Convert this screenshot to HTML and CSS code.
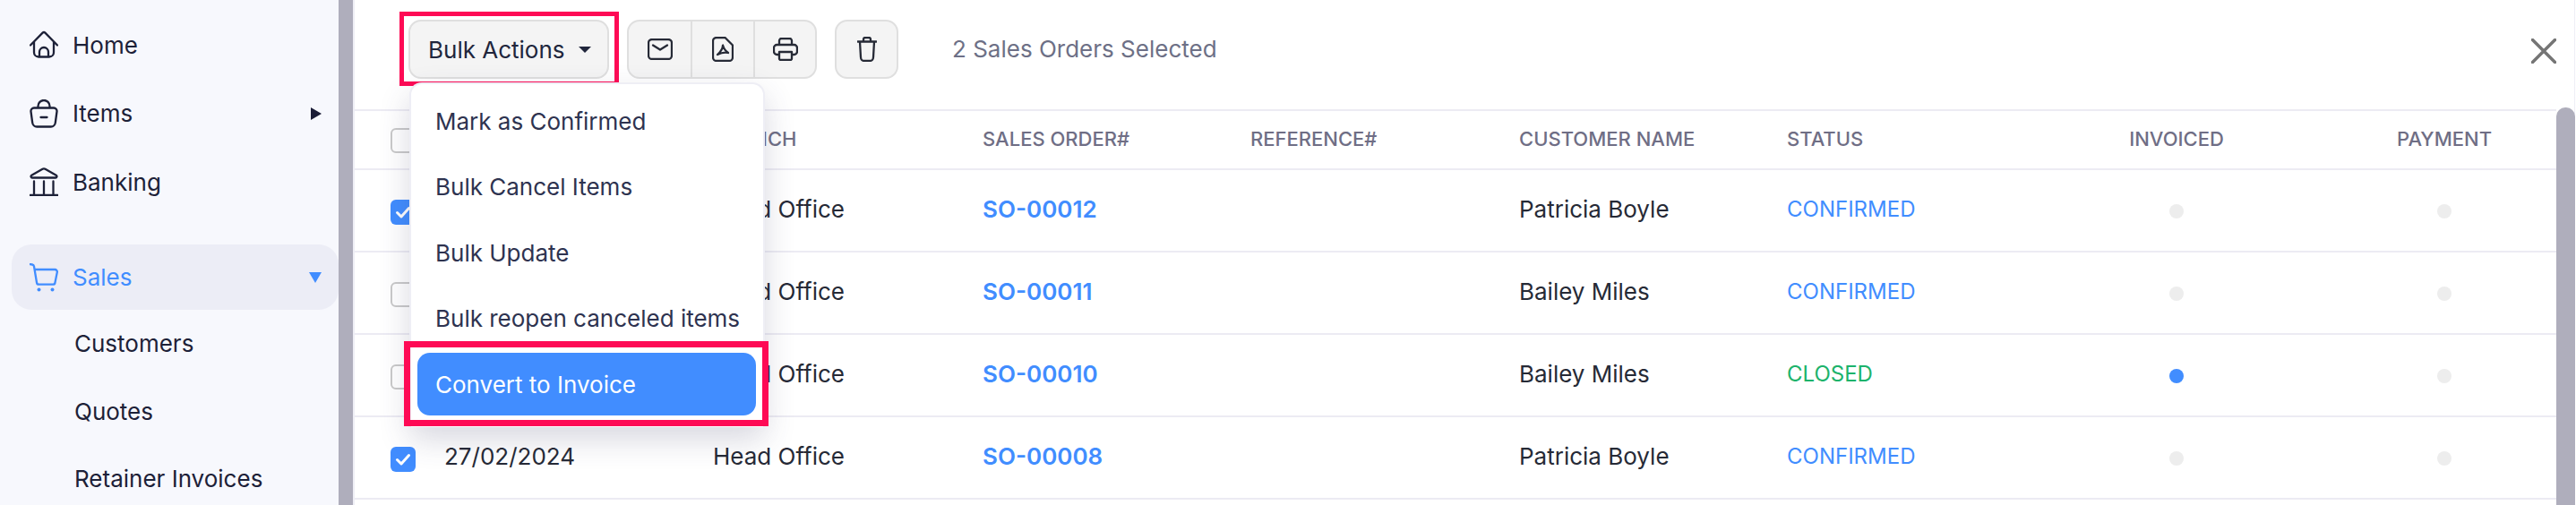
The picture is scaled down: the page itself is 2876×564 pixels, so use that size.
FILE: index.html
```html
<!DOCTYPE html>
<html lang="en">
<head>
<meta charset="utf-8">
<title>Sales Orders</title>
<link rel="stylesheet" href="styles.css">
</head>
<body>
<div class="page">
  <aside class="sidebar">
    <nav class="nav">
      <a class="nav-item">
        <svg class="nav-icon" viewBox="0 0 32 32"><path d="M1 16.5 14.6 2.6a2 2 0 0 1 2.8 0L31 16.500M5 13v11.500a5 5 0 0 0 5 5h12a5 5 0 0 0 5-5V13M11 29.500V24a5 5 0 0 1 10 0v5.500"/></svg>
        <span>Home</span>
      </a>
      <a class="nav-item">
        <svg class="nav-icon" viewBox="0 0 32 32"><path d="M9.500 9.500V7.500a6.500 6.500 0 0 1 13 0v2M5 9.500h22a3.500 3.500 0 0 1 3.500 4l-1.700 12.500a5 5 0 0 1-5 4.500H8.200a5 5 0 0 1-5-4.500L1.500 13.500a3.500 3.500 0 0 1 3.500-4ZM12.500 20h7"/></svg>
        <span>Items</span>
        <i class="arrow-right"></i>
      </a>
      <a class="nav-item">
        <svg class="nav-icon" viewBox="0 0 32 32"><path d="M14.500 1.800 2.300 8.800C1 9.600 1.500 11.500 3 11.500h26c1.500 0 2-1.900.7-2.700L17.500 1.800a3 3 0 0 0-3 0ZM5 15.500V30M16 15.500V30M26.500 15.500V30M.5 31h31"/></svg>
        <span>Banking</span>
      </a>
      <a class="nav-item nav-active">
        <svg class="nav-icon" viewBox="0 0 32 32"><path d="M.5 1 3 1.500a2.500 2.500 0 0 1 2 2L8 21.500a2.500 2.500 0 0 0 2.500 2.200H26a2.500 2.500 0 0 0 2.500-2.200l2.300-11.500a2.500 2.500 0 0 0-2.500-3H6"/><circle class="dot-fill" cx="10.500" cy="29.500" r="2"/><circle class="dot-fill" cx="25.500" cy="29.500" r="2"/></svg>
        <span>Sales</span>
        <i class="arrow-down"></i>
      </a>
      <a class="nav-sub">Customers</a>
      <a class="nav-sub">Quotes</a>
      <a class="nav-sub">Retainer Invoices</a>
    </nav>
  </aside>
  <div class="side-scroll"></div>
  <main class="main">
    <header class="toolbar">
      <div class="bulk">
        <button class="btn btn-bulk">Bulk Actions<i class="caret"></i></button>
        <span class="frame frame-bulk"></span>
        <ul class="menu">
          <li class="menu-item">Mark as Confirmed</li>
          <li class="menu-item">Bulk Cancel Items</li>
          <li class="menu-item">Bulk Update</li>
          <li class="menu-item">Bulk reopen canceled items</li>
          <li class="menu-item menu-active">Convert to Invoice<span class="frame frame-convert"></span></li>
        </ul>
      </div>
      <div class="btn-group">
        <button class="btn-cell">
          <svg class="tool-mail" viewBox="0 0 28 24"><rect x="1" y="1" width="26" height="22" rx="4"/><path d="M6 7.500 14 12.500 22 7.500"/></svg>
        </button>
        <button class="btn-cell">
          <svg class="tool-pdf" viewBox="0 0 24 28"><path d="M5 1h9.500L23 9.500V23a4 4 0 0 1-4 4H5a4 4 0 0 1-4-4V5a4 4 0 0 1 4-4Z"/><path d="M12 9.500c0 3-2 7-6 10.500 4-2 8-3 12-2-3-2-5-5-6-8.500Z"/></svg>
        </button>
        <button class="btn-cell">
          <svg class="tool-print" viewBox="0 0 28 26"><path d="M7 8V3.500A2.500 2.500 0 0 1 9.500 1h9A2.500 2.500 0 0 1 21 3.500V8M7 19H4.500A3.500 3.500 0 0 1 1 15.500V11.500A3.500 3.500 0 0 1 4.500 8h19a3.500 3.500 0 0 1 3.500 3.500v4a3.500 3.500 0 0 1-3.500 3.500H21"/><path d="M7 16h14v7.500a1.500 1.500 0 0 1-1.500 1.500h-11A1.500 1.500 0 0 1 7 23.500Z"/></svg>
        </button>
      </div>
      <button class="btn-trash">
        <svg class="tool-trash" viewBox="0 0 22 28"><path d="M.5 5.500h21M7 5.500V3a2 2 0 0 1 2-2h4a2 2 0 0 1 2 2v2.500M3 5.500 4 23a4 4 0 0 0 4 4h6a4 4 0 0 0 4-4l1-17.500"/></svg>
      </button>
      <span class="selected">2 Sales Orders Selected</span>
      <button class="close">
        <svg viewBox="0 0 28 28"><path d="M1.500 1.500 26.500 26.500M26.500 1.500 1.500 26.500"/></svg>
      </button>
    </header>
    <section class="table">
      <div class="row row-head">
        <div class="cell-check"><span class="check"></span></div>
        <div>DATE</div>
        <div>BRANCH</div>
        <div>SALES ORDER#</div>
        <div>REFERENCE#</div>
        <div>CUSTOMER NAME</div>
        <div>STATUS</div>
        <div class="center">INVOICED</div>
        <div class="center">PAYMENT</div>
      </div>
      <div class="row">
        <div class="cell-check"><span class="check checked"><svg viewBox="0 0 28 28"><path d="M7.500 14.500 12 19l8.500-9.500"/></svg></span></div>
        <div>27/02/2024</div><div>Head Office</div><div class="so">SO-00012</div><div></div><div>Patricia Boyle</div><div class="status confirmed">CONFIRMED</div>
        <div class="center"><span class="dot"></span></div><div class="center"><span class="dot"></span></div>
      </div>
      <div class="row">
        <div class="cell-check"><span class="check"></span></div>
        <div>27/02/2024</div><div>Head Office</div><div class="so">SO-00011</div><div></div><div>Bailey Miles</div><div class="status confirmed">CONFIRMED</div>
        <div class="center"><span class="dot"></span></div><div class="center"><span class="dot"></span></div>
      </div>
      <div class="row">
        <div class="cell-check"><span class="check"></span></div>
        <div>27/02/2024</div><div>Head Office</div><div class="so">SO-00010</div><div></div><div>Bailey Miles</div><div class="status closed">CLOSED</div>
        <div class="center"><span class="dot dot-on"></span></div><div class="center"><span class="dot"></span></div>
      </div>
      <div class="row">
        <div class="cell-check"><span class="check checked"><svg viewBox="0 0 28 28"><path d="M7.500 14.500 12 19l8.500-9.500"/></svg></span></div>
        <div>27/02/2024</div><div>Head Office</div><div class="so">SO-00008</div><div></div><div>Patricia Boyle</div><div class="status confirmed">CONFIRMED</div>
        <div class="center"><span class="dot"></span></div><div class="center"><span class="dot"></span></div>
      </div>
    </section>
    <div class="thumb"></div>
  </main>
</div>
</body>
</html>
```

FILE: styles.css
```css
* { box-sizing: border-box; }
html, body { margin: 0; height: 100%; }
body {
  font-family: Inter, "Liberation Sans", sans-serif;
  font-size: 26px;
  color: #21263c;
  background: #fff;
  overflow: hidden;
}
.page { display: flex; width: 2876px; height: 564px; overflow: hidden; }

/* Sidebar */
.sidebar { width: 378px; flex: none; background: #f7f8fd; padding: 12px 0 0 13px; color: #1d2138; }
.nav { display: flex; flex-direction: column; }
.nav-item { display: flex; align-items: center; height: 76.5px; padding: 0 19px 0 20px; gap: 16px; }
.nav-icon { width: 32px; height: 32px; flex: none; fill: none; stroke: currentColor; stroke-width: 2.300; stroke-linecap: round; stroke-linejoin: round; }
.nav-active { height: 73px; margin-top: 31.500px; border-radius: 22px; background: #ecedf6; color: #418dff; }
.dot-fill { fill: currentColor; stroke: none; }
.arrow-right { margin-left: auto; width: 0; height: 0; border-left: 12px solid #1a1c36; border-top: 7.500px solid transparent; border-bottom: 7.500px solid transparent; }
.arrow-down { margin-left: auto; width: 0; height: 0; border-top: 12px solid #418dff; border-left: 7.500px solid transparent; border-right: 7.500px solid transparent; }
.nav-sub { display: flex; align-items: center; height: 75.500px; padding-left: 70px; }

.side-scroll { width: 16px; flex: none; background: #afaebc; }

/* Main */
.main { position: relative; flex: 1; min-width: 0; display: flex; flex-direction: column; border-left: 2px solid #eeeef5; border-right: 1px solid #eeeef5; margin-right: 1px; background: #fff; }
.toolbar { display: flex; align-items: flex-start; height: 122px; flex: none; padding: 22px 20px 0 60px; }
.bulk { position: relative; flex: none; }
.btn { display: flex; align-items: center; font: inherit; color: #21263c; background: #f4f4f4; border: 2px solid #dfdfdf; border-radius: 14px; }
.btn-bulk { width: 224px; height: 66px; padding: 0 0 0 20px; }
.caret { margin-left: 15px; width: 0; height: 0; border-top: 7px solid #21263c; border-left: 7px solid transparent; border-right: 7px solid transparent; }
.frame { position: absolute; border-style: solid; border-color: #fe0a55; pointer-events: none; }
.frame-bulk { inset: -9px -11px -8px -10.500px; border-width: 5px; }
.frame-convert { inset: -13px -14px -12px -15px; border-width: 7px; }
.menu { position: absolute; z-index: 2; left: 0.500px; top: 70px; width: 397px; height: 385px; margin: 0; padding: 6px 7.500px 0; list-style: none; display: flex; flex-direction: column; gap: 3.500px; background: #fff; border: 2px solid #eeeef5; border-bottom: 0; border-radius: 14px 14px 0 0; box-shadow: 0 14px 34px rgba(60, 60, 100, .2); color: #2e3350; }
.menu-item { position: relative; flex: none; display: flex; align-items: center; height: 70px; padding-left: 20px; border-radius: 14px; white-space: nowrap; }
.menu-active { background: #418dff; color: #fff; }
.btn-group { display: flex; height: 66px; margin-left: 20px; background: #f4f4f4; border: 2px solid #dfdfdf; border-radius: 14px; flex: none; }
.btn-cell { display: flex; align-items: center; justify-content: center; height: 100%; width: 69px; padding: 0; background: none; border: 0; border-left: 2px solid #dfdfdf; }
.btn-cell:first-child { border-left: 0; }
.btn-cell:nth-child(2) { width: 70px; }
.btn-trash { display: flex; align-items: center; justify-content: center; width: 71px; height: 66px; margin-left: 20px; padding: 0; background: #f4f4f4; border: 2px solid #dfdfdf; border-radius: 14px; flex: none; }
.toolbar svg { fill: none; stroke: #262a36; stroke-width: 2.300; stroke-linecap: round; stroke-linejoin: round; }
.tool-mail { width: 28px; height: 24px; }
.tool-pdf { width: 24px; height: 28px; }
.tool-print { width: 28px; height: 26px; }
.tool-trash { width: 22px; height: 28px; }
.selected { height: 66px; line-height: 66px; margin-left: 60px; color: #6d7086; }
.close { width: 28px; height: 28px; margin: 21px 0 0 auto; padding: 0; background: none; border: 0; }
.toolbar .close svg { display: block; width: 28px; height: 28px; stroke: #757575; stroke-width: 3.500; }

/* Table */
.table { flex: 1; min-height: 0; margin-right: 20px; overflow: hidden; border-top: 2px solid #ecebf3; }
.row { display: grid; grid-template-columns: 100px 300px 301px 299px 300px 299px 285px 300px 298px; align-items: center; height: 92px; padding-bottom: 3px; border-bottom: 2px solid #ecebf3; color: #262a36; white-space: nowrap; }
.row-head { height: 66px; font-size: 22px; font-weight: 500; color: #6f6e85; }
.row-head .cell-check { padding-top: 4px; }
.cell-check { padding-left: 40px; display: flex; padding-top: 7px; }
.check { display: block; width: 28px; height: 28px; background: #fff; border: 2px solid #c9c9c9; border-radius: 6px; }
.checked { background: #418dff; border: 0; }
.checked svg { display: block; width: 28px; height: 28px; fill: none; stroke: #fff; stroke-width: 3; stroke-linecap: round; stroke-linejoin: round; }
.so { color: #418dff; font-weight: 600; }
.status { font-size: 24px; }
.confirmed { color: #418dff; }
.closed { color: #1cb36b; }
.center { text-align: center; }
.dot { display: inline-block; vertical-align: middle; width: 16px; height: 16px; border-radius: 50%; background: #ededed; }
.dot-on { background: #418dff; }
.thumb { position: absolute; z-index: 3; top: 120px; right: -1px; bottom: 0; width: 21px; border-radius: 10px 10px 0 0; background: #afaebc; }
```
